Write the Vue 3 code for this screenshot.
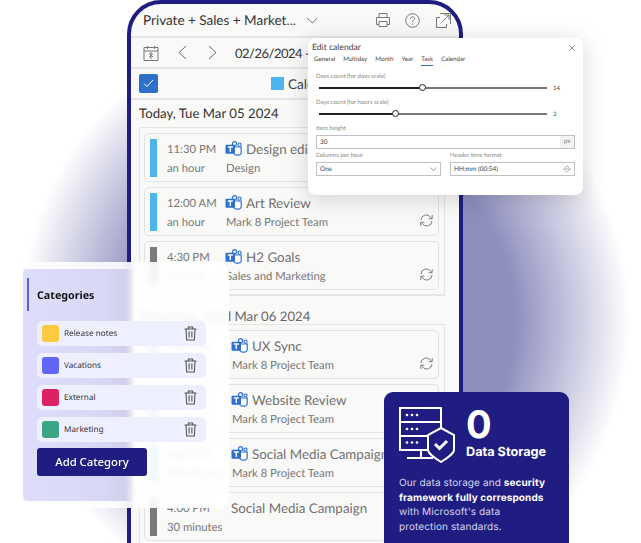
<script setup>
const groupOne = [
  { time: "11:30 PM", dur: "an hour", title: "Design editing", sub: "Design", bar: "#4db5ee", teams: true, repeat: false },
  { time: "12:00 AM", dur: "an hour", title: "Art Review", sub: "Mark 8 Project Team", bar: "#4db5ee", teams: true, repeat: true },
  { time: "4:30 PM", dur: "2 hours", title: "H2 Goals", sub: "Sales and Marketing", bar: "#7a7a7a", teams: true, repeat: true },
];

const groupTwo = [
  { time: "2:00 PM", dur: "an hour", title: "UX Sync", sub: "Mark 8 Project Team", bar: "#4db5ee", teams: true, repeat: true },
  { time: "3:00 PM", dur: "an hour", title: "Website Review", sub: "Mark 8 Project Team", bar: "#4db5ee", teams: true, repeat: false },
  { time: "4:00 PM", dur: "30 minutes", title: "Social Media Campaign", sub: "Mark 8 Project Team", bar: "#4db5ee", teams: true, repeat: false },
  { time: "4:00 PM", dur: "30 minutes", title: "Social Media Campaign", sub: "", bar: "#7a7a7a", teams: false, repeat: false },
];

const groups = [
  { heading: "Today, Tue Mar 05 2024", items: groupOne, wide: false },
  { heading: "Tomorrow, Wed Mar 06 2024", items: groupTwo, wide: true },
];

const tabs = ["General", "Multiday", "Month", "Year", "Task", "Calendar"];

const categories = [
  { name: "Release notes", color: "#fdc93f" },
  { name: "Vacations", color: "#6166f8" },
  { name: "External", color: "#dd2263" },
  { name: "Marketing", color: "#3ba585" },
];
</script>

<template>
  <div class="page">
    <div class="phone">
      <div class="titlebar">
        <span class="title">Private + Sales + Market...</span>
        <svg class="caret" width="13" height="7" viewBox="0 0 13 7"><path d="M1 1l5.500 5L11 1" fill="none" stroke="#777" /></svg>
        <svg class="ic-print" width="16" height="16" viewBox="0 0 16 16" fill="none" stroke="#777">
          <path d="M4 5.500V1.500h8v4M4 12.500H1.500v-7h13v7H12M4 9.500h8v5H4z" />
        </svg>
        <svg class="ic-help" width="15" height="15" viewBox="0 0 15 15" fill="none" stroke="#777">
          <circle cx="7.500" cy="7.500" r="6.800" />
          <path d="M5.500 5.800c0-2.600 4-2.600 4 0 0 1.500-2 1.500-2 3.200" />
          <path d="M7.500 10.500v1.200" />
        </svg>
        <svg class="ic-open" width="17" height="17" viewBox="0 0 17 17" fill="none" stroke="#777">
          <path d="M5 1.500h10.500v10.500M5 5.500H1.500v10h10V12" />
          <path d="M7 10l7-7M9.500 3H14v4.500" />
        </svg>
      </div>

      <div class="toolbar">
        <svg width="16" height="16" viewBox="0 0 16 16" fill="none" stroke="#777">
          <path d="M1 2.500h14v13H1zM1 6h14M4.500 1v3M11.500 1v3" />
          <circle cx="8" cy="9" r="1.200" />
          <path d="M8 10.500v3.500M6 12l2-1.600L10 12" />
        </svg>
        <svg class="nav-l" width="9" height="15" viewBox="0 0 9 15"><path d="M8 1L1 7.500 8 14" fill="none" stroke="#666" /></svg>
        <svg class="nav-r" width="9" height="15" viewBox="0 0 9 15"><path d="M1 1l7 6.500L1 14" fill="none" stroke="#666" /></svg>
        <span class="range">02/26/2024 - 03/10/2024</span>
      </div>

      <div class="filterbar">
        <span class="check">
          <svg width="11" height="9" viewBox="0 0 11 9"><path d="M1 4.500l3 3L10 1" fill="none" stroke="#fff" /></svg>
        </span>
        <span class="swatch"></span>
        <span class="cal-name">Calendar</span>
      </div>

      <div class="agenda">
        <section v-for="g in groups" :key="g.heading" class="day" :class="{ wide: g.wide }">
          <h2 class="day-head">{{ g.heading }}</h2>
          <div class="group">
            <div v-for="(item, i) in g.items" :key="i" class="card">
              <span class="bar" :style="{ background: item.bar }"></span>
              <div class="times">
                <div class="time">{{ item.time }}</div>
                <div class="dur">{{ item.dur }}</div>
              </div>
              <div class="info">
                <div class="info-top">
                  <svg v-if="item.teams" class="teams" width="17" height="16" viewBox="0 0 17 16">
                    <circle cx="9.500" cy="2.800" r="2.100" fill="none" stroke="#2f6fd0" stroke-width="1.200" />
                    <circle cx="14.500" cy="3.600" r="1.600" fill="none" stroke="#2f6fd0" stroke-width="1.100" />
                    <path d="M8 6h8.200v5.200a3 3 0 0 1-3 3h-.7A4.200 4.200 0 0 1 8 10z" fill="#fff" stroke="#2f6fd0" stroke-width="1.200" />
                    <rect x="0.500" y="3.800" width="9.500" height="9" rx="1" fill="#2f6fd0" />
                    <path d="M2.800 6h5M5.300 6v5" stroke="#fff" stroke-width="1.400" fill="none" />
                  </svg>
                  <span class="ev-title">{{ item.title }}</span>
                </div>
                <div class="ev-sub">{{ item.sub }}</div>
              </div>
              <svg v-if="item.repeat" class="repeat" width="13" height="13" viewBox="0 0 13 13" fill="none" stroke="#808080">
                <path d="M1 6A5.200 5.200 0 0 1 10.500 3.200L12 4.600" />
                <path d="M12.200 1v3.700H8.700" />
                <path d="M12 7A5.200 5.200 0 0 1 2.500 9.800L1 8.400" />
                <path d="M.8 12V8.300h3.500" />
              </svg>
            </div>
          </div>
        </section>
      </div>
    </div>

    <div class="dialog">
      <div class="dlg-head">
        <span>Edit calendar</span>
        <svg width="6" height="6" viewBox="0 0 6 6"><path d="M.5.500l5 5M5.500.500l-5 5" stroke="#777" fill="none" stroke-width=".8" /></svg>
      </div>
      <div class="tabs">
        <span v-for="t in tabs" :key="t" class="tab" :class="{ on: t === 'Task' }">{{ t }}</span>
      </div>
      <div class="form">
        <label>Days count (for days scale)</label>
        <div class="slider">
          <div class="track"><i class="fill" style="width: 45%"></i><i class="thumb" style="left: 45%"></i></div>
          <b>14</b>
        </div>
        <label>Days count (for hours scale)</label>
        <div class="slider">
          <div class="track"><i class="fill" style="width: 33.500%"></i><i class="thumb" style="left: 33.500%"></i></div>
          <b>3</b>
        </div>
        <label>Item height</label>
        <div class="input"><span>30</span><em>px</em></div>
        <div class="cols">
          <div>
            <label>Columns per hour</label>
            <div class="input">
              <span>One</span>
              <svg width="7" height="4" viewBox="0 0 7 4"><path d="M.5.500l3 3 3-3" stroke="#777" fill="none" stroke-width=".7" /></svg>
            </div>
          </div>
          <div>
            <label>Header time format</label>
            <div class="input">
              <span>HH:mm (00:54)</span>
              <svg width="8" height="8" viewBox="0 0 8 8"><path d="M1.500 3L4 .8 6.500 3M1.500 5L4 7.200 6.500 5M0 4h8" stroke="#777" fill="none" stroke-width=".6" /></svg>
            </div>
          </div>
        </div>
      </div>
    </div>

    <div class="cat-panel">
      <div class="cat-inner">
        <h3 class="cat-title">Categories</h3>
        <div class="cat-list">
          <div v-for="c in categories" :key="c.name" class="cat-row">
            <span class="cat-swatch" :style="{ background: c.color }"></span>
            <span class="cat-name">{{ c.name }}</span>
            <svg width="13" height="15" viewBox="0 0 12 14" fill="none" stroke="#555" stroke-width="1">
              <path d="M.5 2.800h11M4 2.800V1h4v1.800M1.800 2.800l.6 10.200h7.200l.6-10.200M4.700 5v5.800M7.300 5v5.800" />
            </svg>
          </div>
        </div>
        <button class="cat-add">Add Category</button>
      </div>
    </div>

    <div class="storage">
      <div class="st-top">
        <svg width="57" height="57" viewBox="0 0 57 57" fill="none" stroke="#fff" stroke-width="2">
          <path d="M1 1h41v14H1zM1 15h41v14H1zM1 29h41v14H1zM22 43v8M8 51h26" />
          <g fill="#fff" stroke="none">
            <circle cx="8" cy="8" r="1.300" /><circle cx="13" cy="8" r="1.300" /><circle cx="18" cy="8" r="1.300" />
            <circle cx="8" cy="22" r="1.300" /><circle cx="13" cy="22" r="1.300" /><circle cx="18" cy="22" r="1.300" />
            <circle cx="8" cy="35.500" r="1.300" /><circle cx="13" cy="35.500" r="1.300" /><circle cx="18" cy="35.500" r="1.300" />
          </g>
          <path d="M42 21l13 7v15c0 3-8 9-13 12-5-3-13-9-13-12V28z" fill="#1f1d82" />
          <path d="M36 37l4.500 4.500L48 34" stroke-width="3" />
        </svg>
        <div class="st-head">
          <div class="st-zero">0</div>
          <div class="st-name">Data Storage</div>
        </div>
      </div>
      <p class="st-text">Our data storage and <b>security</b><br /><b>framework fully corresponds</b><br />with Microsoft's data<br />protection standards.</p>
    </div>
  </div>
</template>

<style scoped>
.page {
  position: relative;
  width: 641px;
  height: 543px;
  overflow: hidden;
  background: radial-gradient(circle 305px at 325px 320px, #8e8ebf 0, #8e8ebf 62%, rgba(142, 142, 191, 0) 100%), #fff;
  font-family: Lato, sans-serif;
  text-rendering: geometricPrecision;
}

.phone {
  width: 336px;
  height: 600px;
  margin-left: 127px;
  box-sizing: border-box;
  border: 4px solid #1f1d82;
  border-radius: 34px;
  background: #f9f9f8;
  overflow: hidden;
}

.titlebar {
  display: flex;
  align-items: center;
  height: 32px;
  padding-left: 12px;
  border-bottom: 2px solid #e6e6e6;
  color: #333;
}

.title {
  flex: none;
  width: 154px;
  font-size: 13.500px;
  white-space: nowrap;
}

.titlebar svg { flex: none; }
.caret { margin-left: 9px; }
.ic-print { margin-left: 56px; }
.ic-help { margin-left: 14px; }
.ic-open { margin-left: 15px; }

.toolbar {
  display: flex;
  align-items: center;
  height: 29px;
  padding-left: 12px;
  border-bottom: 2px solid #e6e6e6;
}

.nav-l { margin-left: 19px; }
.nav-r { margin-left: 21px; }

.range {
  margin-left: 18px;
  font-size: 13px;
  letter-spacing: -0.500px;
  color: #333;
  white-space: nowrap;
}

.filterbar {
  display: flex;
  align-items: center;
  height: 29px;
  padding-left: 8px;
  border-bottom: 2px solid #e6e6e6;
}

.check {
  display: flex;
  align-items: center;
  justify-content: center;
  width: 19px;
  height: 19px;
  border-radius: 2px;
  background: #2e6fc9;
}

.swatch {
  width: 13px;
  height: 13px;
  margin-left: 113px;
  background: #4db5ee;
}

.cal-name {
  margin-left: 4px;
  font-size: 13.500px;
  color: #444;
}

.agenda {
  padding: 0 14px 0 8px;
}

.day-head {
  margin: 0;
  height: 27px;
  font-size: 13.200px;
  line-height: 27px;
  font-weight: 400;
  color: #333;
}

.day + .day .day-head {
  height: 28px;
  line-height: 40px;
  color: #666;
}

.group {
  display: flex;
  flex-direction: column;
  gap: 5px;
  padding: 5px 5px 4px 4px;
  border: 1px solid #e6e5e4;
  border-bottom-width: 2px;
}

.card {
  position: relative;
  display: flex;
  height: 49px;
  box-sizing: border-box;
  padding: 5px;
  border: 1px solid #e2e1e0;
  border-radius: 5px;
}

.bar {
  flex: none;
  width: 7px;
  height: 38px;
}

.times {
  flex: none;
  width: 58px;
  margin-left: 10px;
  padding-top: 1px;
  color: #777;
  font-size: 11.300px;
}

.wide .times { width: 64px; }

.time {
  height: 19px;
  line-height: 19px;
  white-space: nowrap;
}

.dur {
  line-height: 20px;
  white-space: nowrap;
}

.info { min-width: 0; }

.info-top {
  display: flex;
  align-items: center;
  gap: 4px;
  height: 19px;
}

.teams { flex: none; }

.ev-title {
  font-size: 13.400px;
  color: #707070;
  white-space: nowrap;
}

.ev-sub {
  margin: 1px 0 0 1px;
  font-size: 11.300px;
  line-height: 20px;
  color: #777;
  white-space: nowrap;
}

.repeat {
  position: absolute;
  right: 5px;
  bottom: 8px;
}

.dialog {
  position: absolute;
  left: 308px;
  top: 38px;
  width: 275px;
  height: 157px;
  box-sizing: border-box;
  padding: 4px 8px 0 4px;
  border-radius: 8px;
  background: #fff;
  box-shadow: 0 4px 24px rgba(0, 0, 0, 0.16);
  color: #444;
}

.dlg-head {
  display: flex;
  align-items: center;
  justify-content: space-between;
  font-size: 8.600px;
  line-height: 11px;
}

.tabs {
  display: flex;
  gap: 8px;
  margin: 2px 0 0 2px;
}

.tab {
  height: 11px;
  font-size: 6.200px;
  line-height: 10px;
}

.tab.on {
  border-bottom: 1px solid #2e6fc9;
  height: 10px;
}

.form {
  padding: 7px 0 0 4px;
}

.form label {
  display: block;
  font-size: 6px;
  line-height: 8px;
  color: #888;
}

.slider {
  display: flex;
  align-items: center;
  height: 14px;
  margin: 0 0 4px 3px;
}

.track {
  position: relative;
  width: 228px;
  height: 1.500px;
  background: #777;
}

.fill {
  position: absolute;
  left: 0;
  top: -0.500px;
  height: 2px;
  background: #222;
}

.thumb {
  position: absolute;
  top: -3px;
  width: 7px;
  height: 7px;
  margin-left: -3px;
  box-sizing: border-box;
  border: 1px solid #222;
  border-radius: 50%;
  background: #fff;
}

.slider b {
  margin-left: 6px;
  font-size: 6px;
  font-weight: 400;
}

.input {
  display: flex;
  align-items: center;
  justify-content: space-between;
  height: 14px;
  margin-top: 2px;
  box-sizing: border-box;
  padding: 0 3px;
  border: 1px solid #c0c0c0;
  font-size: 6.500px;
  color: #444;
}

.input em {
  align-self: stretch;
  width: 14px;
  margin-right: -3px;
  background: #f2f2f2;
  font-style: normal;
  text-align: center;
  line-height: 12px;
  color: #888;
}

.cols {
  display: grid;
  grid-template-columns: 125px 125px;
  column-gap: 9px;
  margin-top: 3px;
}

.cat-panel {
  position: absolute;
  left: 15px;
  top: 262px;
  width: 214px;
  height: 246px;
  box-sizing: border-box;
  padding: 7px 0 7px 8px;
  border-radius: 12px;
  background: rgba(255, 255, 255, 0.88);
  backdrop-filter: blur(3px);
  font-family: "Noto Sans", sans-serif;
}

.cat-inner {
  position: relative;
  height: 100%;
  padding: 0 0 0 14px;
  border-radius: 4px 0 0 4px;
  background: linear-gradient(to right, #dedefc 0, #d8d8f6 80px, #d0d0ea 102px, rgba(255, 255, 255, 0) 111px);
}

.cat-title {
  margin: 0;
  height: 52px;
  padding-top: 18px;
  box-sizing: border-box;
  font-size: 10.700px;
  font-weight: 700;
  line-height: 18px;
  color: #111;
}

.cat-title::before {
  content: "";
  position: absolute;
  left: 4px;
  top: 9px;
  width: 2px;
  height: 33px;
  background: #5a5fe0;
}

.cat-list {
  display: flex;
  flex-direction: column;
  gap: 7px;
}

.cat-row {
  display: flex;
  align-items: center;
  width: 169px;
  height: 25px;
  box-sizing: border-box;
  padding: 0 9px 0 5px;
  border-radius: 5px;
  background: #eef0ff;
}

.cat-swatch {
  width: 17px;
  height: 17px;
  border-radius: 3px;
}

.cat-name {
  flex: 1;
  margin: -1px 0 0 5px;
  font-size: 8.200px;
  color: #333;
}

.cat-add {
  display: block;
  width: 110px;
  height: 28px;
  margin-top: 6px;
  padding: 0 0 2px;
  border: 0;
  border-radius: 3px;
  background: #1f1d82;
  color: #fff;
  font-family: "Noto Sans", sans-serif;
  font-size: 11.300px;
  font-weight: 500;
}

.storage {
  position: absolute;
  left: 384px;
  top: 392px;
  width: 185px;
  height: 151px;
  box-sizing: border-box;
  padding: 15px 0 0 15px;
  border-radius: 9px 9px 0 0;
  background: #1f1d82;
  color: #fff;
  font-family: Inter, sans-serif;
}

.st-top {
  display: flex;
}

.st-head {
  margin-left: 10px;
}

.st-zero {
  height: 36px;
  font-size: 38px;
  font-weight: 700;
  line-height: 36px;
}

.st-name {
  margin-top: 2px;
  font-size: 12.700px;
  font-weight: 700;
  line-height: 16px;
  white-space: nowrap;
}

.st-text {
  margin: 12px 0 0;
  font-size: 10px;
  letter-spacing: 0.100px;
  line-height: 14.700px;
  color: #d5d5ee;
}

.st-text b {
  font-weight: 700;
  color: #fff;
}
</style>

<style>
html, body {
  background: #fff;
}
</style>
